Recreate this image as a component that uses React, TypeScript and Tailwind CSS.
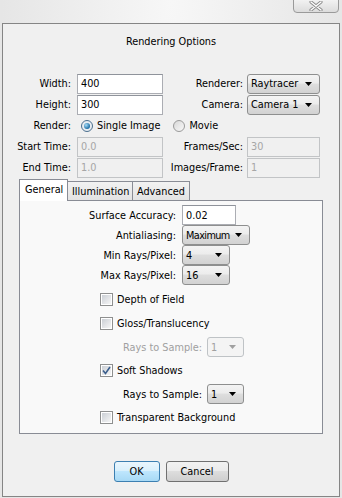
import React from "react";

const FONT = 'Tahoma, "DejaVu Sans Condensed", "DejaVu Sans", sans-serif';

function Arrow({ disabled }: { disabled?: boolean }) {
  return (
    <svg width="7" height="4" viewBox="0 0 7 4" className="shrink-0">
      <path d="M0 0 H7 L3.5 4 Z" fill={disabled ? "#a0a0a0" : "#000"} />
    </svg>
  );
}

function Select({ value, w, disabled, tight }: { value: string; w: string; disabled?: boolean; tight?: boolean }) {
  return (
    <div
      className={`${w} h-[20px] flex items-center justify-between pl-[3px] pr-[7px] rounded-[3px] border ${
        disabled
          ? "border-[#bfc3c6] bg-[#f4f4f4] text-[#a0a0a0]"
          : "border-[#8e8f8f] bg-[linear-gradient(#f4f4f4_0%,#ececec_45%,#dedede_50%,#d2d2d2_100%)] text-black"
      }`}
    >
      <span className={tight ? "tracking-[-0.6px]" : ""}>{value}</span>
      <Arrow disabled={disabled} />
    </div>
  );
}

function TextBox({ value, w, disabled }: { value: string; w: string; disabled?: boolean }) {
  return (
    <div
      className={`${w} h-[20px] flex items-center pl-[3px] border ${
        disabled
          ? "border-[#c2c4c6] bg-[#f0f0f0] text-[#a6a6a6]"
          : "border-[#abadb3] border-t-[#8f939b] bg-white text-black"
      }`}
    >
      {value}
    </div>
  );
}

function Radio({ checked }: { checked?: boolean }) {
  return (
    <span
      className={`w-[12px] h-[12px] rounded-full border flex items-center justify-center shrink-0 ${
        checked ? "border-[#4b6f8e] bg-[#e8edf2]" : "border-[#9a9a9a] bg-[linear-gradient(135deg,#d8d8d8,#f8f8f8)]"
      }`}
    >
      {checked && (
        <span className="w-[6px] h-[6px] rounded-full bg-[radial-gradient(circle_at_35%_35%,#a7dcf7,#1d6fa6_70%,#0d4e7a)]" />
      )}
    </span>
  );
}

function Check({ checked }: { checked?: boolean }) {
  return (
    <span className="w-[13px] h-[13px] border border-[#8e8f8f] bg-white flex items-center justify-center shrink-0">
      <span className="w-[9px] h-[9px] bg-[linear-gradient(135deg,#cbcfd5,#f6f6f6)] flex items-center justify-center">
        {checked && (
          <svg width="9" height="9" viewBox="0 0 9 9">
            <path d="M1 4.5 L3.5 7.5 L8 1" stroke="#3b5e8c" strokeWidth="1.6" fill="none" />
          </svg>
        )}
      </span>
    </span>
  );
}

function TopRow({
  left,
  leftCtrl,
  right,
  rightCtrl,
}: {
  left: string;
  leftCtrl: React.ReactNode;
  right: string;
  rightCtrl: React.ReactNode;
}) {
  return (
    <div className="h-[21px] flex items-center">
      <div className="w-[68px] text-right">{left}</div>
      <div className="ml-[6px]">{leftCtrl}</div>
      <div className="w-[80px] text-right">{right}</div>
      <div className="ml-[4px]">{rightCtrl}</div>
    </div>
  );
}

function PanelRow({ label, children }: { label: string; children: React.ReactNode }) {
  return (
    <div className="h-[20px] flex items-center">
      <div className="w-[156px] text-right">{label}</div>
      <div className="ml-[6px]">{children}</div>
    </div>
  );
}

export default function App() {
  return (
    <div
      className="w-[342px] h-[498px] relative bg-[radial-gradient(ellipse_at_50%_0%,#f7f7f7_0%,#e6e6e6_70%)] text-[10.8px] leading-[13px] text-black"
      style={{ fontFamily: FONT }}
    >
      <div className="h-[23px] flex justify-end pr-[3px]">
        <div className="w-[46px] h-[14px] -mt-[1px] rounded-b-[4px] border border-[#9a9a9a] bg-[linear-gradient(#f2f2f2,#dcdcdc)] flex items-center justify-center">
          <svg width="14" height="10" viewBox="0 0 14 10">
            <path d="M2 1 L12 9 M12 1 L2 9" stroke="#8a8a8a" strokeWidth="3.2" strokeLinecap="round" />
            <path d="M2 1 L12 9 M12 1 L2 9" stroke="#ffffff" strokeWidth="1.4" strokeLinecap="round" />
          </svg>
        </div>
      </div>
      <div className="mx-[2px] h-[474px] border border-[#858585] bg-[#f0f0f0] flex flex-col">
        <div className="pt-[11px] h-[14px] box-content text-center leading-[14px]">Rendering Options</div>
        <div className="mt-[24px] flex flex-col">
          <TopRow
            left="Width:"
            leftCtrl={<TextBox value="400" w="w-[86px]" />}
            right="Renderer:"
            rightCtrl={<Select value="Raytracer" w="w-[73px]" />}
          />
          <TopRow
            left="Height:"
            leftCtrl={<TextBox value="300" w="w-[86px]" />}
            right="Camera:"
            rightCtrl={<Select value="Camera 1" w="w-[73px]" />}
          />
          <div className="h-[21px] flex items-center">
            <div className="w-[68px] text-right">Render:</div>
            <div className="ml-[10px] flex items-center gap-[4px]">
              <Radio checked />
              <span>Single Image</span>
            </div>
            <div className="ml-[13px] flex items-center gap-[4px]">
              <Radio />
              <span>Movie</span>
            </div>
          </div>
          <TopRow
            left="Start Time:"
            leftCtrl={<TextBox value="0.0" w="w-[86px]" disabled />}
            right="Frames/Sec:"
            rightCtrl={<TextBox value="30" w="w-[73px]" disabled />}
          />
          <TopRow
            left="End Time:"
            leftCtrl={<TextBox value="1.0" w="w-[86px]" disabled />}
            right="Images/Frame:"
            rightCtrl={<TextBox value="1" w="w-[73px]" disabled />}
          />
        </div>

        <div className="mt-[1px] ml-[16px] w-[304px] flex flex-col">
          <div className="flex items-end h-[21px] relative z-10">
            <div className="h-[22px] -mb-[1px] px-[5px] w-[49px] border border-b-0 border-[#898c95] bg-white flex items-start pt-[3px]">
              General
            </div>
            <div className="h-[19px] w-[65px] border border-l-0 border-b-0 border-[#898c95] bg-[linear-gradient(#f2f2f2,#e3e3e3)] flex items-start pt-[3px] pl-[4px]">
              Illumination
            </div>
            <div className="h-[19px] w-[57px] border border-l-0 border-b-0 border-[#898c95] bg-[linear-gradient(#f2f2f2,#e3e3e3)] flex items-start pt-[3px] pl-[4px]">
              Advanced
            </div>
          </div>
          <div className="h-[234px] border border-[#898c95] bg-[#f9f9f9] flex flex-col pt-[4px]">
            <PanelRow label="Surface Accuracy:">
              <TextBox value="0.02" w="w-[54px]" />
            </PanelRow>
            <PanelRow label="Antialiasing:">
              <Select value="Maximum" w="w-[68px]" tight />
            </PanelRow>
            <PanelRow label="Min Rays/Pixel:">
              <Select value="4" w="w-[48px]" />
            </PanelRow>
            <PanelRow label="Max Rays/Pixel:">
              <Select value="16" w="w-[48px]" />
            </PanelRow>
            <div className="mt-[2px] flex flex-col pl-[80px]">
              <div className="h-[24px] flex items-center gap-[4px]">
                <Check />
                <span>Depth of Field</span>
              </div>
              <div className="h-[24px] flex items-center gap-[4px]">
                <Check />
                <span>Gloss/Translucency</span>
              </div>
              <div className="h-[24px] flex items-center">
                <div className="w-[102px] text-right text-[#a0a0a0]">Rays to Sample:</div>
                <div className="ml-[5px]">
                  <Select value="1" w="w-[37px]" disabled />
                </div>
              </div>
              <div className="h-[23px] flex items-center gap-[4px]">
                <Check checked />
                <span>Soft Shadows</span>
              </div>
              <div className="h-[24px] flex items-center">
                <div className="w-[102px] text-right">Rays to Sample:</div>
                <div className="ml-[5px]">
                  <Select value="1" w="w-[37px]" />
                </div>
              </div>
              <div className="h-[23px] flex items-center gap-[4px]">
                <Check />
                <span>Transparent Background</span>
              </div>
            </div>
          </div>
        </div>

        <div className="mt-[27px] flex justify-center gap-[6px]">
          <div className="w-[46px] h-[21px] rounded-[3px] border border-[#3c7fb1] bg-[linear-gradient(#eaf6fd_0%,#d9f0fc_45%,#bee6fd_50%,#a7d9f5_100%)] flex items-center justify-center">
            OK
          </div>
          <div className="w-[63px] h-[21px] rounded-[3px] border border-[#707070] bg-[linear-gradient(#f2f2f2_0%,#ebebeb_45%,#dddddd_50%,#cfcfcf_100%)] flex items-center justify-center">
            Cancel
          </div>
        </div>
      </div>
    </div>
  );
}
